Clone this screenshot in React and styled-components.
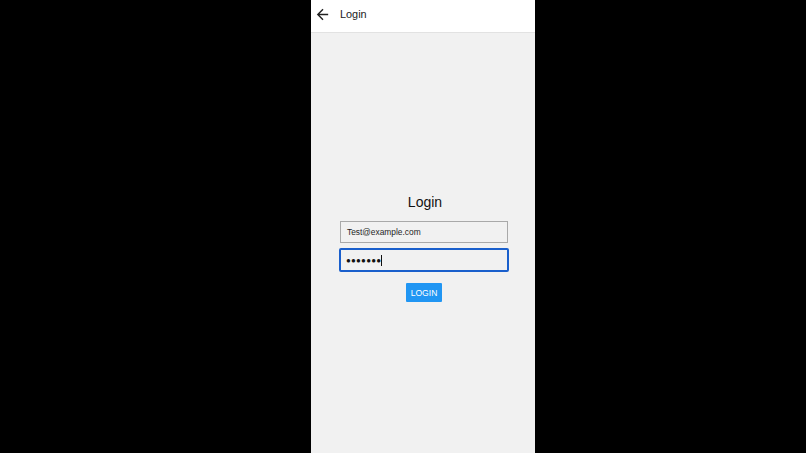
import React from "react";
import styled, { createGlobalStyle } from "styled-components";

const Global = createGlobalStyle`
  html, body { margin: 0; padding: 0; background: #000; height: 100%; }
  #root { height: 100%; }
  * { box-sizing: border-box; }
`;

const Stage = styled.div`
  height: 453px;
  display: flex;
  justify-content: center;
  padding-left: 40px;
  background: #000;
`;

const Phone = styled.div`
  width: 224px;
  height: 100%;
  display: flex;
  flex-direction: column;
  background: #f1f1f1;
  font-family: "Liberation Sans", Arial, sans-serif;
`;

const Header = styled.header`
  height: 33px;
  flex: none;
  background: #fff;
  border-bottom: 1px solid #e2e2e2;
  display: flex;
  align-items: center;
  padding-left: 3px;
  padding-bottom: 4px;
  gap: 9px;
`;

const BackBtn = styled.div`
  width: 17px;
  height: 17px;
  display: flex;
  align-items: center;
  justify-content: center;
  color: #202020;
`;

const HeaderTitle = styled.span`
  font-size: 10.9px;
  color: #222;
`;

const Body = styled.main`
  flex: 1;
  display: flex;
  flex-direction: column;
  align-items: center;
  padding-top: 160px;
  padding-left: 2px;
`;

const Title = styled.h1`
  margin: 0 0 9px;
  font-size: 14px;
  font-weight: 400;
  color: #111;
  line-height: 19px;
  padding-left: 2px;
`;

const Field = styled.div`
  width: 168px;
  height: 22px;
  margin-bottom: ${(p) => p.$mb || 0}px;
  background: #f1f1f1;
  border: ${(p) => (p.$focus ? "2px solid #1a5fcc" : "1px solid #a9a9a9")};
  border-radius: ${(p) => (p.$focus ? "2px" : "0")};
  display: flex;
  align-items: center;
  padding-left: ${(p) => (p.$focus ? 5 : 6)}px;
  font-size: 8.4px;
  color: #1e1e1e;
  ${(p) => p.$focus && "width: 170px; height: 24px;"}
`;

const Dots = styled.span`
  font-size: 8px;
  letter-spacing: 0.2px;
  color: #111;
`;

const Caret = styled.span`
  display: inline-block;
  width: 1px;
  height: 11px;
  background: #111;
`;

const Button = styled.button`
  margin-top: 11px;
  height: 19px;
  padding: 0 5px;
  border: none;
  border-radius: 1px;
  background: #2196f3;
  color: #fff;
  font-family: "Liberation Sans", Arial, sans-serif;
  font-size: 8.6px;
  cursor: pointer;
`;

export default function App() {
  return (
    <>
      <Global />
      <Stage>
        <Phone>
          <Header>
            <BackBtn>
              <svg width="17" height="17" viewBox="0 0 24 24">
                <path d="M20 11H7.83l5.59-5.59L12 4l-8 8 8 8 1.41-1.41L7.83 13H20v-2z" fill="currentColor" />
              </svg>
            </BackBtn>
            <HeaderTitle>Login</HeaderTitle>
          </Header>
          <Body>
            <Title>Login</Title>
            <Field $mb={5}>Test@example.com</Field>
            <Field $focus>
              <Dots>●●●●●●●</Dots>
              <Caret />
            </Field>
            <Button>LOGIN</Button>
          </Body>
        </Phone>
      </Stage>
    </>
  );
}
